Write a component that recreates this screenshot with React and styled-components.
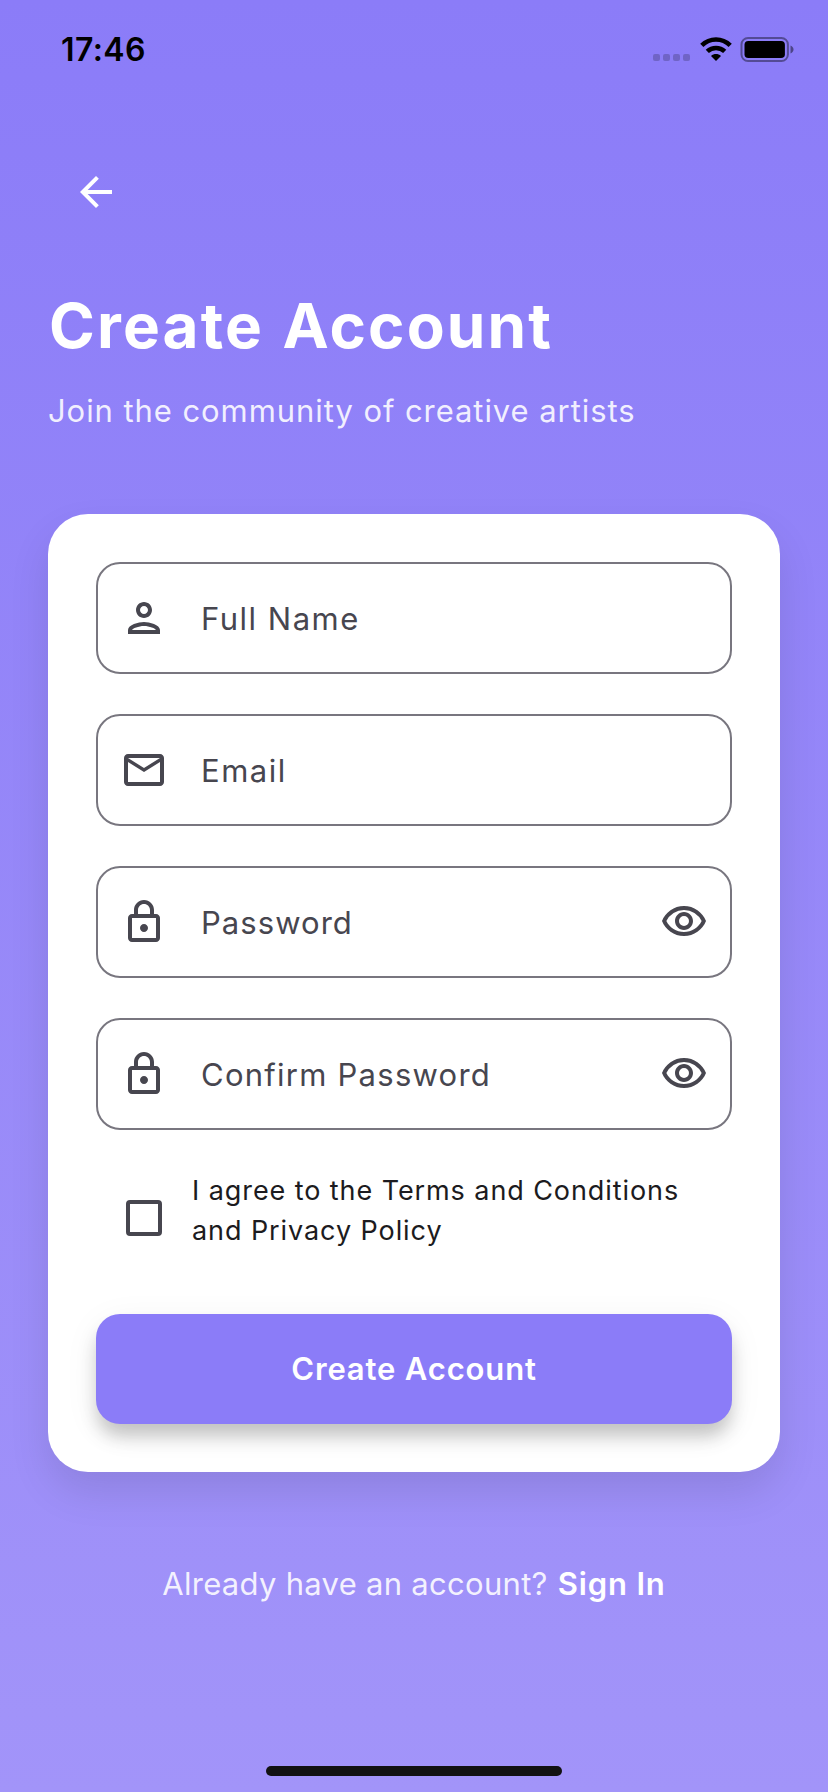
import React, { useState } from 'react';
import styled, { createGlobalStyle } from 'styled-components';
import {
  MdArrowBack,
  MdOutlineEmail,
  MdOutlineLock,
  MdOutlinePerson,
  MdOutlineVisibility,
} from 'react-icons/md';

const GlobalStyle = createGlobalStyle`
  * { box-sizing: border-box; }
  body { margin: 0; }
  button { font: inherit; border: 0; padding: 0; background: none; cursor: pointer; }
`;

const Screen = styled.div`
  display: flex;
  flex-direction: column;
  width: 828px;
  height: 1792px;
  overflow: hidden;
  background: linear-gradient(180deg, #8b7cf8 0%, #a294f9 100%);
  font-family: Inter, 'Liberation Sans', sans-serif;
  font-size: 31px;
  line-height: 40px;
  color: #ffffff;
`;

const StatusBar = styled.header`
  display: flex;
  justify-content: space-between;
  align-items: flex-start;
  height: 88px;
  padding: 29px 34px 0 61px;
  color: #000000;
`;

const Clock = styled.time`
  margin-top: 1px;
  font-size: 32px;
  font-weight: 600;
  letter-spacing: 0.4px;
`;

const StatusIcons = styled.div`
  display: flex;
  align-items: flex-start;
  padding-top: 8px;
`;

const SignalDots = styled.div`
  display: flex;
  gap: 3px;
  margin: 17px 10px 0 0;
`;

const Dot = styled.span`
  width: 7px;
  height: 7px;
  border-radius: 2px;
  background: rgba(0, 0, 0, 0.2);
`;

const WifiGlyph = styled.svg`
  width: 32px;
  height: 24px;
  margin-right: 8px;
`;

const BatteryGlyph = styled.svg`
  width: 54px;
  height: 25px;
`;

const Content = styled.main`
  display: flex;
  flex: 1;
  flex-direction: column;
  padding: 56px 48px 16px;
`;

const BackButton = styled.button`
  display: flex;
  align-items: center;
  justify-content: center;
  width: 96px;
  height: 96px;
  color: #ffffff;
`;

const Title = styled.h1`
  margin: 48px 0 0 1px;
  font-size: 62px;
  line-height: 76px;
  font-weight: 700;
  letter-spacing: 2.15px;
  word-spacing: 1.5px;
`;

const Subtitle = styled.p`
  margin: 27px 0 83px;
  font-weight: 400;
  letter-spacing: 0.93px;
  color: rgba(255, 255, 255, 0.88);
`;

const Card = styled.form`
  display: flex;
  flex-direction: column;
  gap: 40px;
  height: 958px;
  padding: 48px;
  border-radius: 40px;
  background: #ffffff;
  box-shadow: 0 20px 40px rgba(0, 0, 0, 0.1);
`;

const FieldBox = styled.label`
  display: flex;
  align-items: center;
  height: 112px;
  padding: 0 22px;
  border: 2px solid #78767f;
  border-radius: 24px;
  color: #47464f;
`;

const FieldLabel = styled.span`
  flex: 1;
  margin-left: 33px;
  padding-top: 2px;
  font-weight: 400;
  letter-spacing: ${({ $spacing }) => $spacing}px;
`;

const AgreeRow = styled.div`
  display: flex;
  height: 96px;
`;

const CheckArea = styled.button`
  display: flex;
  align-items: center;
  justify-content: center;
  width: 96px;
  height: 96px;
`;

const CheckMark = styled.span`
  width: 36px;
  height: 36px;
  border: 4px solid #47464f;
  border-radius: 4px;
  background: ${({ $on }) => ($on ? '#47464f' : 'transparent')};
`;

const AgreeText = styled.p`
  margin: 1px 0 0;
  font-size: 27px;
  font-weight: 400;
  letter-spacing: 0.92px;
  color: #1c1b20;
`;

const SubmitButton = styled.button`
  height: 110px;
  margin-top: 8px;
  border-radius: 24px;
  background: #8b7cf8;
  color: #ffffff;
  font-weight: 600;
  letter-spacing: 0.85px;
  box-shadow: 0 14px 18px -2px rgba(0, 0, 0, 0.21), 0 8px 36px rgba(0, 0, 0, 0.06);
`;

const Footer = styled.p`
  margin: 92px 0 0;
  text-align: center;
  font-weight: 400;
  letter-spacing: 0.29px;
  color: rgba(255, 255, 255, 0.88);
`;

const SignIn = styled.a`
  margin-left: 1px;
  font-weight: 600;
  letter-spacing: 0.85px;
  color: #ffffff;
`;

const HomeIndicator = styled.div`
  align-self: center;
  width: 296px;
  height: 10px;
  margin-top: auto;
  border-radius: 5px;
  background: #121212;
`;

function Wifi() {
  return (
    <WifiGlyph viewBox="0 0 32 24">
      <path d="M1.8 8.4C9.8 .6 22.2 .6 30.2 8.4" fill="none" stroke="currentColor" strokeWidth="4.6" />
      <path d="M7.3 14.4C12.2 9.8 19.8 9.8 24.7 14.4" fill="none" stroke="currentColor" strokeWidth="4.6" />
      <path d="M16 24l-5-5.1c2.9-2.6 7.1-2.6 10 0z" fill="currentColor" />
    </WifiGlyph>
  );
}

function Battery() {
  return (
    <BatteryGlyph viewBox="0 0 54 25">
      <rect x="1.5" y="1" width="46.4" height="23" rx="6.5" fill="none" stroke="#000" strokeOpacity="0.4" strokeWidth="2" />
      <rect x="4.5" y="4" width="40.4" height="17" rx="3.8" />
      <path d="M50.5 8.5c4 1.5 4 6.5 0 8z" fillOpacity="0.45" />
    </BatteryGlyph>
  );
}

function Field({ icon: Icon, label, spacing, secret }) {
  return (
    <FieldBox>
      <Icon size={48} />
      <FieldLabel $spacing={spacing}>{label}</FieldLabel>
      {secret && <MdOutlineVisibility size={48} />}
    </FieldBox>
  );
}

export default function App() {
  const [agreed, setAgreed] = useState(false);
  return (
    <Screen>
      <GlobalStyle />
      <StatusBar>
        <Clock>17:46</Clock>
        <StatusIcons>
          <SignalDots>
            <Dot />
            <Dot />
            <Dot />
            <Dot />
          </SignalDots>
          <Wifi />
          <Battery />
        </StatusIcons>
      </StatusBar>
      <Content>
        <BackButton aria-label="Back">
          <MdArrowBack size={48} />
        </BackButton>
        <Title>Create Account</Title>
        <Subtitle>Join the community of creative artists</Subtitle>
        <Card onSubmit={(e) => e.preventDefault()}>
          <Field icon={MdOutlinePerson} label="Full Name" spacing={1.5} />
          <Field icon={MdOutlineEmail} label="Email" spacing={1.5} />
          <Field icon={MdOutlineLock} label="Password" spacing={1.05} secret />
          <Field icon={MdOutlineLock} label="Confirm Password" spacing={1.25} secret />
          <AgreeRow>
            <CheckArea type="button" aria-label="Agree" onClick={() => setAgreed(!agreed)}>
              <CheckMark $on={agreed} />
            </CheckArea>
            <AgreeText>
              I agree to the Terms and Conditions
              <br />
              and Privacy Policy
            </AgreeText>
          </AgreeRow>
          <SubmitButton type="submit">Create Account</SubmitButton>
        </Card>
        <Footer>
          Already have an account? <SignIn>Sign In</SignIn>
        </Footer>
        <HomeIndicator />
      </Content>
    </Screen>
  );
}
